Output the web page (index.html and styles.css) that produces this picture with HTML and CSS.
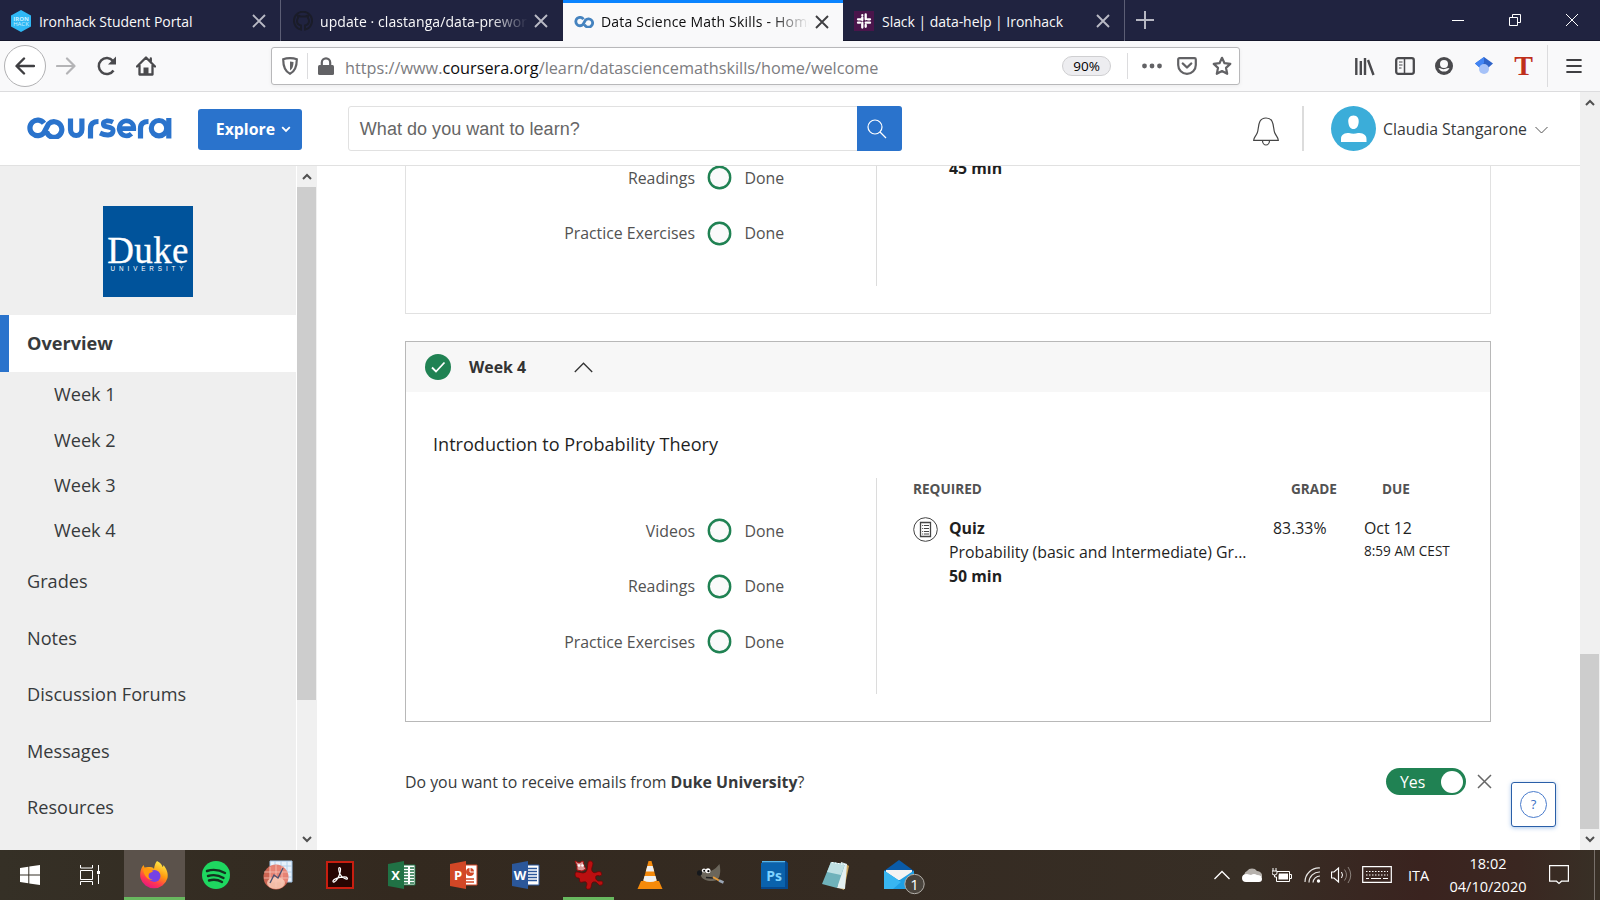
FILE: index.html
```
<!DOCTYPE html>
<html lang="en">
<head>
<meta charset="utf-8">
<title>Data Science Math Skills - Home</title>
<link rel="stylesheet" href="styles.css">
</head>
<body>
<div class="desktop">
  <div class="tabs">
    <div class="tab">
      <svg class="fav" width="20" height="22" viewBox="0 0 20 22"><path d="M10 0l10 5.5v11L10 22 0 16.500v-11z" fill="#2fb8f5"/><text x="10" y="10.500" class="fav-text">IRON</text><text x="10" y="16" class="fav-text thin">HACK</text></svg>
      <span class="tab-title t1">Ironhack Student Portal</span>
      <svg class="tab-x" width="14" height="14" viewBox="0 0 14 14"><path d="M1 1l12 12M13 1L1 13"/></svg>
    </div>
    <div class="tab second">
      <svg class="fav" width="20" height="20" viewBox="0 0 20 20"><path d="M8 18.500v-4c-3-.5-4-2-4-4.500q0-1.500 1-3l0-2.500 2.500 1h5L15 4.500V7q1 1.500 1 3c0 2.500-1 4-4 4.500v4a9 9 0 1 0-4 0z" fill="none" stroke="#1a1c29" stroke-width="2"/></svg>
      <span class="tab-title fade t2">update · clastanga/data-prework</span>
      <svg class="tab-x" width="14" height="14" viewBox="0 0 14 14"><path d="M1 1l12 12M13 1L1 13"/></svg>
    </div>
    <div class="tab active">
      <svg class="fav" width="20" height="12" viewBox="0 0 20 12"><path d="M9.500 3.200A4.200 4.200 0 1 0 9 8.500L11.500 4a4.200 4.200 0 1 1-1 4.500" fill="none" stroke="#4583bf" stroke-width="2.800"/></svg>
      <span class="tab-title fade t3">Data Science Math Skills - Home</span>
      <svg class="tab-x" width="14" height="14" viewBox="0 0 14 14"><path d="M1 1l12 12M13 1L1 13"/></svg>
    </div>
    <div class="tab fourth">
      <svg class="fav" width="20" height="20" viewBox="0 0 20 20"><path fill="#4a154b" d="M0 0h20v20H0z"/><path d="M8.300 6.500V9M8.300 4.200h0M4 8.300h4.300M11.700 3.500v4.800M13.800 8.300h2.200M11.700 11.700H16M11.700 14v1.800M8.300 11.700v4.800M4 11.700h2" stroke="#fff" stroke-width="2.300" stroke-linecap="round"/></svg>
      <span class="tab-title t4">Slack | data-help | Ironhack</span>
      <svg class="tab-x" width="14" height="14" viewBox="0 0 14 14"><path d="M1 1l12 12M13 1L1 13"/></svg>
    </div>
    <svg class="plus" width="18" height="18" viewBox="0 0 18 18"><path d="M9 0v18M0 9h18" stroke="#b6b7c2" stroke-width="2"/></svg>
    <div class="win">
      <svg width="12" height="14" viewBox="0 0 12 14"><path d="M0 7.500h12" stroke="#fff"/></svg>
      <svg width="12" height="14" viewBox="0 0 12 14"><path d="M.5 4.500h8v8h-8zM3.500 4V1.500h8v8H9" fill="none" stroke="#fff"/></svg>
      <svg width="14" height="14" viewBox="0 0 14 14"><path d="M1 1l12 12M13 1L1 13" stroke="#fff"/></svg>
    </div>
  </div>

  <div class="toolbar">
    <div class="nav">
      <span class="back"><svg width="20" height="18" viewBox="0 0 20 18"><path d="M19 9H2M9 1.500L1.500 9 9 16.500" fill="none" stroke="#3f3f42" stroke-width="2.400" stroke-linecap="round" stroke-linejoin="round"/></svg></span>
      <svg width="20" height="18" viewBox="0 0 20 18"><path d="M1 9h17M11 1.500L18.500 9 11 16.500" fill="none" stroke="#b4b4b6" stroke-width="2.200" stroke-linecap="round" stroke-linejoin="round"/></svg>
      <svg width="20" height="20" viewBox="0 0 20 20"><path d="M16.500 14.500A8 8 0 1 1 16 5" fill="none" stroke="#4a4a4d" stroke-width="2.500"/><path d="M19 .5v8h-8z" fill="#4a4a4d"/></svg>
      <svg class="home" width="20" height="20" viewBox="0 0 20 20"><path d="M1 10.500L10 1.500l9 9M3.500 9.500v9h13v-9M14.800 2.500v3" fill="none" stroke="#4a4a4d" stroke-width="2.300" stroke-linecap="round" stroke-linejoin="round"/><path d="M7.500 18v-6.500h5V18z" fill="#4a4a4d"/></svg>
    </div>
    <div class="url">
      <svg class="shield" width="16" height="18" viewBox="0 0 16 18"><path d="M8 1.200c2.500 0 5 .4 6.800 1.100C14.800 10 13 14.500 8 16.800 3 14.500 1.200 10 1.200 2.300 3 1.600 5.500 1.200 8 1.200z" fill="none" stroke="#626265" stroke-width="2.200"/><path d="M8 4.500v9C10.500 12 11.500 9 11.500 5z" fill="#626265"/></svg>
      <i class="sep"></i>
      <svg class="lock" width="16" height="18" viewBox="0 0 16 18"><path d="M3.800 9V5.500a4.200 4.200 0 0 1 8.400 0V9" fill="none" stroke="#626265" stroke-width="2.200"/><rect y="8" width="16" height="10" rx="1.500" fill="#626265"/></svg>
      <span class="address">https://www.<b>coursera.org</b>/learn/datasciencemathskills/home/welcome</span>
      <span class="zoom">90%</span>
      <i class="sep wide"></i>
      <svg class="dots" width="20" height="6" viewBox="0 0 20 6"><circle cx="2.500" cy="3" r="2.400"/><circle cx="10" cy="3" r="2.400"/><circle cx="17.500" cy="3" r="2.400"/></svg>
      <svg width="20" height="18" viewBox="0 0 20 18"><path d="M1.200 2.500q0-1.300 1.300-1.300h15q1.300 0 1.300 1.300V8a8.800 8.800 0 0 1-17.600 0z" fill="none" stroke="#626265" stroke-width="2.200"/><path d="M5.800 6.500l4.200 4 4.200-4" fill="none" stroke="#626265" stroke-width="2.400" stroke-linecap="round" stroke-linejoin="round"/></svg>
      <svg class="star" width="20" height="20" viewBox="0 0 20 20"><path d="M10 1.800l2.500 5.400 5.800.7-4.300 4 1.200 5.900L10 15l-5.200 2.800L6 11.900l-4.300-4 5.800-.7z" fill="none" stroke="#626265" stroke-width="2.200" stroke-linejoin="round"/></svg>
    </div>
    <div class="tools">
      <svg width="20" height="19" viewBox="0 0 20 19"><path d="M1.300 1v17M5.800 4v14M10 1v17M13 3l5.500 15" stroke="#4a4a4d" stroke-width="2.400" fill="none"/></svg>
      <svg width="20" height="18" viewBox="0 0 20 18"><rect x="1.200" y="1.200" width="17.600" height="15.600" rx="2" fill="none" stroke="#4a4a4d" stroke-width="2.300"/><path d="M9.500 1v16" stroke="#4a4a4d" stroke-width="1.500"/><path d="M4 5h3.500M4 8h3.500M4 11h2.500" stroke="#4a4a4d"/></svg>
      <svg width="18" height="18" viewBox="0 0 18 18"><circle cx="9" cy="9" r="9" fill="#4a4a4d"/><circle cx="9" cy="7" r="4" fill="#f9f9fa"/><path d="M3.500 11q1.800 0 3 .8a5 5 0 0 0 4 0q1.200-.8 4-.8a6 6 0 0 1-11 0z" fill="#f9f9fa"/></svg>
      <svg class="scholar" width="18" height="18" viewBox="0 0 18 18"><path d="M9 0l9 6.500-4.500 4h-9L0 6.500z" fill="#2f64c8"/><path d="M9 0L0 6.500l4.500 4L9 6z" fill="#4285f4"/><circle cx="9" cy="12" r="5" fill="#a6c2f8"/></svg>
      <span class="tee">T</span>
      <span class="menu"><svg width="16" height="16" viewBox="0 0 16 16"><path d="M1.200 2h13.600M1.200 8h13.600M1.200 14h13.600" stroke="#3f3f42" stroke-width="2.200" stroke-linecap="round"/></svg></span>
    </div>
  </div>

  <div class="page">
    <div class="site">
      <header class="header">
        <svg class="logo" width="145" height="22" viewBox="0 0 145 22" fill="none" stroke="#2a73cc" stroke-width="5.200">
          <path d="M17 6.300A7.800 7.800 0 1 0 17 15.500L21.500 7A7.800 7.800 0 1 1 19.500 14.500"/>
          <path d="M43.500 1.500V12.500a5.700 6 0 0 0 11.400 0V1.500"/>
          <path d="M63.500 21.500V11.500q0-7 8-7"/>
          <path d="M86 5.200q-3-1.500-6.500-1.200c-4.500.7-4 5 0 5.700 5.500 1 7 1.800 6.500 4.800-.8 4.500-7.500 4.300-13 1.500" stroke-width="4.800"/>
          <path d="M91.500 11.700h15.300a7.300 7.500 0 1 0-2.300 5.100" stroke-width="4.700"/>
          <path d="M113.500 21.500V11.500q0-7 8-7"/>
          <circle cx="132" cy="11.200" r="7.700"/><path d="M141.800 1v20.500"/>
        </svg>
        <span class="explore">Explore<svg width="10" height="7" viewBox="0 0 10 7"><path d="M1.200 1.200L5 5l3.800-3.800" fill="none" stroke="#fff" stroke-width="1.800"/></svg></span>
        <div class="search"><span>What do you want to learn?</span><div class="go"><svg width="20" height="20" viewBox="0 0 20 20"><circle cx="8" cy="8" r="7" fill="none" stroke="#fff" stroke-width="1.200"/><path d="M13 13l6 6" stroke="#fff" stroke-width="1.300"/></svg></div></div>
        <svg class="bell" width="26" height="29" viewBox="0 0 26 29"><path d="M.7 23.300c0-3.300 2-3.600 3.600-7.500C6.200 11 4.200 1 13 1s6.800 10 8.700 14.800c1.600 3.900 3.600 4.200 3.600 7.500zM9.500 23.500a3.500 4.500 0 0 0 7 0" fill="none" stroke="#444" stroke-width="1.200"/></svg>
        <div class="user">
          <svg width="45" height="45" viewBox="0 0 45 45"><circle cx="22.500" cy="22.500" r="22.500" fill="#3badd9"/><path d="M22.500 9.500c4 0 5.500 3 5.200 6.500-.4 4.500-2.200 7-5.200 7s-4.800-2.500-5.200-7c-.3-3.500 1.200-6.500 5.200-6.500zM10 36v-3c0-5 4-6 8-6q4.500 1.500 9 0c4 0 8.500 1 8.500 6v3z" fill="#fff"/></svg>
          <span>Claudia Stangarone</span>
          <svg class="caret" width="13" height="8" viewBox="0 0 13 8"><path d="M.5 1l6 6 6-6" fill="none" stroke="#555"/></svg>
        </div>
      </header>
      <div class="body">
        <nav class="side">
          <div class="duke"><span class="duke-name">Duke</span><span class="duke-sub">UNIVERSITY</span></div>
          <div class="item on">Overview</div>
          <div class="item week first">Week 1</div>
          <div class="item week">Week 2</div>
          <div class="item week">Week 3</div>
          <div class="item week">Week 4</div>
          <div class="item">Grades</div>
          <div class="item">Notes</div>
          <div class="item">Discussion Forums</div>
          <div class="item">Messages</div>
          <div class="item">Resources</div>
        </nav>
        <div class="bar side-bar">
          <svg width="10" height="7" viewBox="0 0 10 7"><path d="M1 6l4-4 4 4"/></svg><i></i><svg width="10" height="7" viewBox="0 0 10 7"><path d="M1 1l4 4 4-4"/></svg>
        </div>
        <main class="main">
          <section class="card prev">
            <div class="progress">
              <div class="row"><span>Readings</span><i></i><span>Done</span></div>
              <div class="row"><span>Practice Exercises</span><i></i><span>Done</span></div>
            </div>
            <div class="prev-time">45 min</div>
          </section>
          <section class="card now">
            <div class="card-head">
              <svg width="26" height="26" viewBox="0 0 26 26"><circle cx="13" cy="13" r="13" fill="#208253"/><path d="M7 13.500l4 4 8.500-9" fill="none" stroke="#fff" stroke-width="1.800"/></svg>
              <b>Week 4</b>
              <svg width="19" height="11" viewBox="0 0 19 11"><path d="M.8 10L9.500 1.200 18.200 10" fill="none" stroke="#333" stroke-width="1.300"/></svg>
            </div>
            <h2>Introduction to Probability Theory</h2>
            <div class="cols">
              <div class="progress">
                <div class="row"><span>Videos</span><i></i><span>Done</span></div>
                <div class="row"><span>Readings</span><i></i><span>Done</span></div>
                <div class="row"><span>Practice Exercises</span><i></i><span>Done</span></div>
              </div>
              <div class="required">
                <div class="req-head"><span>REQUIRED</span><span class="h-grade">GRADE</span><span class="h-due">DUE</span></div>
                <div class="req">
                  <svg width="25" height="25" viewBox="0 0 25 25" fill="none" stroke="#444"><circle cx="12.500" cy="12.500" r="11.800"/><path d="M7.500 5.500h10v14h-10z" stroke-width="1.300"/><path d="M9.200 8.500h1M9.200 11.500h1M9.200 14.500h1M9.200 17h1M11 8.500h5M11 11.500h5M11 14.500h5M11 17h5"/></svg>
                  <div class="desc"><b>Quiz</b><span>Probability (basic and Intermediate) Gr...</span><b>50 min</b></div>
                  <span class="grade">83.33%</span>
                  <div class="due"><span>Oct 12</span><small>8:59 AM CEST</small></div>
                </div>
              </div>
            </div>
          </section>
          <div class="emails">
            <span>Do you want to receive emails from <b>Duke University</b>?</span>
            <span class="toggle">Yes<i></i></span>
            <svg width="15" height="15" viewBox="0 0 15 15"><path d="M1 1l13 13M14 1L1 14" stroke="#666" stroke-width="1.500"/></svg>
          </div>
          <div class="help"><span>?</span></div>
        </main>
      </div>
    </div>
    <div class="bar page-bar">
      <svg width="10" height="7" viewBox="0 0 10 7"><path d="M1 6l4-4 4 4"/></svg><i></i><svg width="10" height="7" viewBox="0 0 10 7"><path d="M1 1l4 4 4-4"/></svg>
    </div>
  </div>

  <div class="taskbar">
    <div class="app w-win"><svg width="20" height="20" viewBox="0 0 20 20" fill="#fff"><path d="M0 3l8.300-1.200v7.700H0zM9.300 1.600L20 0v9.500H9.300zM0 10.500h8.300v7.700L0 17zM9.300 10.500H20V20L9.300 18.400z"/></svg></div>
    <div class="app w-task"><svg width="20" height="20" viewBox="0 0 20 20" fill="none" stroke="#fff"><path d="M.5 0v3h12V0M.5 20v-3.500h12V20M.5 5.500h12v9H.5zM18.500 0v6M18.500 9.500V19"/><path d="M17 6h3v3h-3z" fill="#fff" stroke="none"/></svg></div>
    <div class="app w-ff focus"><svg width="30" height="30" viewBox="0 0 30 30"><defs><linearGradient id="fx" x1=".8" y1="0" x2=".3" y2="1"><stop offset="0" stop-color="#fff44f"/><stop offset=".45" stop-color="#ff980e"/><stop offset=".75" stop-color="#ff3750"/><stop offset="1" stop-color="#e31587"/></linearGradient></defs><path d="M18 1c4 2 5 4 5.500 6 1-.5 1-2 1-2 3 4 5 8 4 13a14 14 0 0 1-27 0C.5 13 2 8 4.500 5l1 2.500L9 7c3 0 5 0 6 2 .5-3 1-6 3-8z" fill="url(#fx)"/><circle cx="15.500" cy="16" r="6" fill="#7542e5"/><path d="M4 9c4-2 8 0 10 2.500l-4 2c-2 3 1 6 4 6-5 1-9-3-10-10.500z" fill="#ff980e"/></svg></div>
    <div class="app w-sp"><svg width="28" height="28" viewBox="0 0 28 28"><circle cx="14" cy="14" r="14" fill="#1ed760"/><path d="M5 10q9-3 18 2M6 15q8-2.500 15.500 2M7 19.500q7-2 13 1.500" fill="none" stroke="#14311f" stroke-width="2.400" stroke-linecap="round"/></svg></div>
    <div class="app w-it"><svg width="30" height="30" viewBox="0 0 30 30"><path d="M7 1h22v21H7z" fill="#e7f1fb" stroke="#9fc1e3"/><path d="M12 1v21M18 1v21M24 1v21M7 6h22M7 12h22M7 17h22" stroke="#b5d0ea"/><circle cx="13" cy="17" r="12.500" fill="#e8705c" fill-opacity=".85"/><ellipse cx="13" cy="23" rx="9" ry="6" fill="#fbd3bd" opacity=".8"/><path d="M7 7v20M13 5v22M19 6v20M1 12h24M1 18h24" stroke="#f9c5b8" stroke-width=".8"/><path d="M7 23l4-8 4 3 5-10" fill="none" stroke="#4d5270" stroke-width="1.400"/></svg></div>
    <div class="app w-pdf"><svg width="28" height="28" viewBox="0 0 28 28"><path d="M1 1h26v26H1z" fill="#260502" stroke="#c81e10" stroke-width="2"/><path d="M13.500 6.500c2.200 0 .5 7-2 11.200-2 3.300-5 4.300-4.500 2.300C8 17 20 14.500 21.300 17s-5.600.5-7.600-4.500c-1.300-3.200-1.200-6 -.2-6z" fill="none" stroke="#fff" stroke-width="1.200"/></svg></div>
    <div class="app w-xl"><svg width="28" height="28" viewBox="0 0 28 28"><path d="M14 4h13v20H14z" fill="#fff" stroke="#207245"/><path d="M16 7h4M16 10h4M16 13h4M16 16h4M16 19h4M16 22h4M22 7h4M22 10h4M22 13h4M22 16h4M22 19h4M22 22h4" stroke="#207245" stroke-width="1.500"/><path d="M0 3l16-3v28L0 25z" fill="#207245"/><text x="7.500" y="19" class="office">X</text></svg></div>
    <div class="app w-pp"><svg width="28" height="28" viewBox="0 0 28 28"><path d="M14 4h13v20H14z" fill="#fff" stroke="#d24726"/><circle cx="20" cy="11" r="4" fill="#d24726"/><path d="M20 11V6.500M20 11h5" stroke="#fff"/><path d="M16 18h8M16 21h8" stroke="#d24726" stroke-width="1.500"/><path d="M0 3l16-3v28L0 25z" fill="#d24726"/><text x="8" y="19" class="office">P</text></svg></div>
    <div class="app w-wd"><svg width="28" height="28" viewBox="0 0 28 28"><path d="M14 4h13v20H14z" fill="#fff" stroke="#2b579a"/><path d="M16 7.500h9M16 10.500h9M16 13.500h9M16 16.500h9M16 19.500h9" stroke="#2b579a" stroke-width="1.500"/><path d="M0 3l16-3v28L0 25z" fill="#2b579a"/><text x="8" y="19" class="office">W</text></svg></div>
    <div class="app w-red run"><svg width="30" height="30" viewBox="0 0 30 30"><path d="M1 14q0-3 3-2l5 1q3 0 4-3c1-3 0-7 2-9q3-1 4 2c0 3-2 5-1 8 1 2 3 2 5 1q2-1 4 0 2 3-1 4-2-1-4 0c-1 2 0 4 2 5l4 0q2 2 0 4-3 1-4-1-2-3-5-2c-2 1-1 5-3 7q-3 1-4-1c0-2 2-4 0-6-2-1-4 1-6 0-1-1 0-3-1-4-1 0-4 0-4-4z" fill="#bb0f10" stroke="#650808" stroke-width=".8"/><path d="M1 1l4 2 4-2 1 5 2 3-4 2-5-1V6z" fill="#d99a9a" stroke="#a11"/><circle cx="5" cy="5.500" r="1.300" fill="#fff"/><circle cx="8.500" cy="5.500" r="1.300" fill="#fff"/></svg></div>
    <div class="app w-vlc"><svg width="26" height="30" viewBox="0 0 26 30"><path d="M4 21h18l3.500 8H.5z" fill="#f58a0b"/><path d="M11.500 1h3l5.500 21q-7 4-14 0z" fill="#f58a0b"/><path d="M10.300 6h5.400l1.500 5.500H8.800zM7.500 16h11l1.200 4.500q-6.700 3-13.400 0z" fill="#eef0f2"/></svg></div>
    <div class="app w-gimp"><svg width="30" height="24" viewBox="0 0 30 24"><path d="M4 9.500q2-2 4-1 4 1 7-.5c4-2 6-4 8.500-7q1.500 7 0 12c-1 4-4 5-8 5-5 0-9-1.500-10.500-5z" fill="#6b665b"/><circle cx="8" cy="7.500" r="2.100" fill="#fff"/><circle cx="12" cy="7.800" r="2.500" fill="#fff"/><circle cx="8.200" cy="7.800" r="1"/><circle cx="12.400" cy="8.200" r="1.100"/><ellipse cx="3.500" cy="10" rx="2.500" ry="2.800" fill="#15181c"/><path d="M10 14.500l7 .5" stroke="#222" stroke-width="1.500"/><path d="M17 14l6 3.500" stroke="#e79b38" stroke-width="2"/><path d="M23 17.500l4.500 2" stroke="#9ba6b5" stroke-width="2.600"/></svg></div>
    <div class="app w-ps"><svg width="28" height="28" viewBox="0 0 28 28"><path d="M2 0h24l2 2v26H1z" fill="#06498d"/><path d="M1 2h24v24H1z" fill="#0a62ac"/><path d="M2 .7h23" stroke="#55b6ec" stroke-width="1.400"/><text x="14" y="19.500" class="ps">Ps</text></svg></div>
    <div class="app w-note"><svg width="28" height="29" viewBox="0 0 28 29"><path d="M24 3l3 2-5 24-5-2z" fill="#c9a35a"/><path d="M19 1l6 2-2 25-8-1z" fill="#e3f0f1"/><path d="M9 1l14 2-8 24-15-4z" fill="#6fb2bb"/><path d="M9 1l14 2-4 11L5 11z" fill="#bfe0e3"/><path d="M10 1.500l13 2" stroke="#fff" stroke-dasharray="1.500 1.500"/></svg></div>
    <div class="app w-mail"><svg width="41" height="35" viewBox="0 0 41 35"><path d="M0 11L15 0l15 11v18H0z" fill="#0a5ba8"/><path d="M2 10h26v10H2z" fill="#f3f3f3"/><path d="M0 10.500l15 10 15-10V29H0z" fill="#1f9fe4"/><path d="M0 29V10.500L17 22l-8 7z" fill="#38b6f1"/><circle cx="30.500" cy="24" r="9.700" fill="#4a443d" stroke="#b3afa9"/><text x="30.500" y="29.500" class="badge">1</text></svg></div>
    <div class="tray">
      <svg width="16" height="10" viewBox="0 0 16 10"><path d="M.5 9L8 1.500 15.500 9" fill="none" stroke="#fff" stroke-width="1.300"/></svg>
      <svg class="cloud" width="20" height="14" viewBox="0 0 20 14"><path d="M4 10a4 4 0 0 1 1-7 6 5.500 0 0 1 10 0 5 5 0 0 1 5 6l-7 1z" fill="#b6b1ac"/><path d="M0 10q0-4 5-4l4 1q3-2 6 0 5 0 5 4 0 3-3 3H4q-4 0-4-4z" fill="#fff"/></svg>
      <svg width="20" height="15" viewBox="0 0 20 15"><path d="M5 3.500h12.500v10H4.500V9M18 6.500h1.500v4H18" fill="none" stroke="#fff"/><path d="M7 5.500h9v6H6.500V8z" fill="#fff"/><path d="M1 0v3M4 0v3M0 3h5v2q0 2-2.500 2T0 5zM2.500 7v2h2" stroke="#fff" fill="none"/></svg>
      <svg class="wifi" width="17" height="16" viewBox="0 0 17 16"><path d="M1 15A14 14 0 0 1 16 1M5 15.500A10.500 10.500 0 0 1 16 5M9 15.500a7 7 0 0 1 7-6.500" fill="none" stroke="#e8e6e4" stroke-width="1.200"/><circle cx="14.500" cy="14" r="1.700" fill="#fff"/></svg>
      <svg class="sound" width="21" height="18" viewBox="0 0 21 18"><path d="M.5 6H3l4.500-4v14L3 12H.5z" fill="none" stroke="#fff" stroke-width="1.200"/><path d="M10.500 6q2 3 0 6" stroke="#fff" fill="none"/><path d="M13.500 3.500q4 5.500 0 11M17 1q5.500 8 0 16" stroke="#8b827c" fill="none"/></svg>
      <svg width="30" height="18" viewBox="0 0 30 18" fill="none" stroke="#fff"><path d="M.7.7h28.600v15.600H.7z" stroke-width="1.200"/><path d="M4 5.500h22M4 9h22" stroke-dasharray="1.500 1.500"/><path d="M4 12.500h3M9 12.500h10M21 12.500h5"/></svg>
      <span class="lang">ITA</span>
      <div class="clock"><span>18:02</span><span class="date">04/10/2020</span></div>
      <svg class="notif" width="20" height="20" viewBox="0 0 20 20"><path d="M.6.600h18.800v15.600h-6.900L10 18.500l-2.500-2.300H.6z" fill="none" stroke="#fff" stroke-width="1.200"/></svg>
      <i class="peek"></i>
    </div>
  </div>
</div>
</body>
</html>
```
FILE: styles.css
```
* { box-sizing: border-box; }
body { margin: 0; font-family: "Open Sans", "Noto Sans", sans-serif; }
svg { flex: none; display: block; }
.desktop { width: 1600px; height: 900px; overflow: hidden; display: flex; flex-direction: column; background: #fff; }

.tabs { height: 41px; flex: none; background: #202340; display: flex; align-items: center; border-bottom: 1px solid #15172c; }
.tab { width: 281px; height: 41px; flex: none; display: flex; align-items: center; padding: 2px 14px 0 11px; border-right: 1px solid #5c5e75; color: #f9f9fa; font-size: 14px; }
.tab .fav { margin-right: 8px; }
.tab.active { width: 280px; background: #f9f9fa; color: #0c0c0d; border-top: 3px solid #0a84ff; border-right: 0; padding-top: 0; }
.tab.active .fav { margin-right: 7px; }
.tab.second { width: 282px; border-right: 0; padding-left: 12px; padding-right: 15px; }
.tab.second .fav { margin-right: 7px; }
.tab.fourth { width: 282px; }
.t1, .t4 { letter-spacing: -.04px; }
.t2 { letter-spacing: .08px; }
.t3 { letter-spacing: .2px; }
.tab-title { flex: 1; white-space: nowrap; overflow: hidden; }
.t2, .t3 { margin-right: 6px; }
.fade { -webkit-mask-image: linear-gradient(90deg, #000 82%, transparent 100%); mask-image: linear-gradient(90deg, #000 82%, transparent 100%); }
.tab-x path { stroke: #b9bac5; stroke-width: 1.9; }
.tab.active .tab-x path { stroke: #3f3f42; }
.fav-text { font: 700 6px "Open Sans", sans-serif; fill: #c9f0ff; text-anchor: middle; }
.fav-text.thin { font-weight: 400; }
.plus { margin-left: 11px; }
.win { margin-left: auto; display: flex; align-items: center; gap: 44.500px; padding-right: 21px; }

.toolbar { height: 51px; flex: none; background: #f9f9fa; border-bottom: 1px solid #dcdcde; display: flex; align-items: center; }
.nav { display: flex; align-items: center; gap: 21px; width: 271px; padding-left: 4px; flex: none; }
.home { margin-left: -2px; }
.back { width: 42px; height: 42px; border: 1px solid #b1b1b3; border-radius: 50%; background: #fff; display: flex; align-items: center; justify-content: center; margin-right: -11px; }
.url { width: 969px; height: 38px; flex: none; border: 1px solid #b8b8ba; border-radius: 3px; background: #fff; display: flex; align-items: center; padding-right: 7px; box-shadow: 0 1px 4px rgba(0,0,0,.06); }
.shield { margin-left: 10px; }
.sep { width: 1px; height: 26px; background: #dcdcde; margin: 0 10px 0 9px; flex: none; }
.sep.wide { margin: 0 14px 0 16px; }
.address { flex: 1; margin-left: 11px; font-size: 16.250px; color: #7c7c80; white-space: nowrap; padding-top: 3px; }
.address b { font-weight: 400; color: #0c0c0d; }
.zoom { width: 49px; height: 20px; border: 1px solid #cfcfd1; border-radius: 10px; background: #ededf0; font-size: 13.500px; line-height: 19px; text-align: center; }
.dots { margin-right: 15px; fill: #626265; }
.star { margin-left: 15px; }
.tools { flex: 1; display: flex; align-items: center; padding-left: 115px; gap: 20px; }
.scholar { margin-left: 2px; }
.tee { font: 700 28px/24px "Liberation Serif", serif; color: #bf2f1b; width: 19px; text-align: center; margin-left: 1px; }
.menu { width: 51px; height: 42px; border-left: 1px solid #dcdcde; padding: 13px 0 0 18px; margin-left: -6px; flex: none; }

.page { height: 758px; flex: none; display: flex; }
.site { width: 1580px; flex: none; display: flex; flex-direction: column; }
.bar { background: #f0f0f0; display: flex; flex-direction: column; align-items: center; flex: none; }
.bar path { fill: none; stroke: #505050; stroke-width: 2; }
.bar i { width: 19px; background: #cdcdcd; }
.page-bar { width: 20px; padding: 7px 1px 0 0; }
.page-bar i { margin-top: 548px; height: 175px; margin-bottom: 7px; }
.side-bar { width: 21px; border-left: 1px solid #fff; padding: 7px 1px 0 0; }
.side-bar i { margin-top: 7px; height: 513px; margin-bottom: 136px; }

.header { height: 74px; flex: none; border-bottom: 1px solid #e1e1e1; display: flex; align-items: center; padding: 0 32px 1px 27px; color: #373a3c; font-size: 15.850px; }
.explore { margin: 2px 0 0 26px; width: 104px; height: 41px; border-radius: 3px; background: #2a73cc; color: #fff; font-weight: 700; display: flex; align-items: center; justify-content: center; gap: 6px; padding-left: 7px; }
.search { margin-left: 46px; width: 555px; height: 45px; border: 1px solid #e1e1e1; border-radius: 3px; display: flex; align-items: center; font: 18px "Liberation Sans", sans-serif; color: #666; padding-left: 11px; }
.search span { padding-top: 2px; letter-spacing: .03px; }
.go { margin: -1px -1px -1px auto; width: 45px; height: 45px; background: #2a73cc; border-radius: 0 3px 3px 0; display: flex; align-items: center; justify-content: center; padding: 2px 6px 0 0; }
.bell { margin-left: 351px; margin-top: 7px; }
.user { margin-left: 23px; border-left: 2px solid #dcdcdc; padding-left: 27px; display: flex; align-items: center; white-space: nowrap; }
.user span { margin-left: 7px; width: 145px; padding-top: 2px; }
.caret { margin: 3px 0 0 7px; }

.body { height: 684px; flex: none; display: flex; overflow: hidden; }
.side { width: 296px; flex: none; background: #efefef; color: #373a3c; font-size: 18.150px; }
.duke { margin: 40px 0 18px 103px; width: 90px; height: 91px; background: #00539b; color: #fff; display: flex; flex-direction: column; align-items: center; }
.duke-name { font: 37px/30px "Liberation Serif", serif; margin-top: 30px; letter-spacing: .3px; -webkit-text-stroke: .3px #fff; }
.duke-sub { font: 6.300px/7px "Liberation Sans", sans-serif; letter-spacing: 3.900px; margin: -1px -2px 0 0; }
.item { height: 56.500px; padding-left: 27px; display: flex; align-items: center; }
.item.on { background: #fff; border-left: 9px solid #2a73cc; padding: 0 0 2px 18px; font-weight: 700; height: 57px; }
.item.week { height: 45.200px; padding-left: 54px; }
.item.first { padding-bottom: 1px; }

.main { width: 1263px; flex: none; position: relative; padding-left: 88px; color: #1f1f1f; font-size: 15.860px; }
.card { width: 1086px; border: 1px solid #e1e1e1; display: flex; }
.prev { height: 148px; border-top: 0; margin-bottom: 27px; }
.prev .progress { height: 120px; }
.prev-time { font-weight: 700; margin-left: 72px; margin-top: -9px; }
.progress { width: 471px; border-right: 1px solid #dcdcdc; color: #525252; flex: none; }
.row { height: 55.500px; display: flex; align-items: center; }
.row span:first-child { width: 289px; text-align: right; }
.row i { width: 23px; height: 23px; border: 2.500px solid #208253; border-radius: 50%; margin: 0 13.500px 0 13px; background: #fafafa; box-shadow: 0 0 0 .4px #208253; }
.prev .row:first-child { margin-top: -16px; }
.now { height: 381px; border-color: #b8b8b8; flex-direction: column; }
.card-head { height: 50px; background: #f7f7f7; display: flex; align-items: center; padding-left: 19px; color: #333; flex: none; }
.card-head b { width: 58px; margin: 0 47px 0 18px; white-space: nowrap; }
h2 { margin: 40px 0 0 27px; font-size: 18.080px; line-height: 24px; font-weight: 400; }
.cols { display: flex; margin-top: 22px; }
.cols .progress { height: 216px; padding-top: 25px; }
.required { padding-left: 36px; }
.req-head { font-size: 13.600px; font-weight: 700; color: #525252; display: flex; line-height: 22px; white-space: nowrap; }
.req-head span:first-child { width: 378px; }
.h-grade { width: 91px; }
.req { display: flex; margin-top: 16px; line-height: 24px; white-space: nowrap; }
.req svg { margin: 1px 11px 0 0; }
.desc { width: 324px; display: flex; flex-direction: column; }
.grade { width: 91px; }
.due { display: flex; flex-direction: column; }
.due small { font-size: 13.600px; line-height: 22px; }
.emails { width: 1086px; height: 27px; margin-top: 46px; display: flex; align-items: center; color: #373a3c; white-space: nowrap; }
.toggle { margin-left: auto; margin-right: 11px; width: 80px; height: 27px; border-radius: 14px; background: #208253; color: #fff; display: flex; align-items: center; justify-content: space-between; padding: 0 3px 0 14px; }
.toggle i { width: 22px; height: 22px; border-radius: 50%; background: #fff; }
.help { position: absolute; left: 1194px; top: 616px; width: 45px; height: 45px; border: 1px solid #2a5fa8; border-radius: 3px; background: #fff; box-shadow: 0 1px 4px rgba(42,115,204,.4); display: flex; align-items: center; justify-content: center; }
.help span { width: 27px; height: 27px; border: 1.500px solid #4a7ccc; border-radius: 50%; font-size: 13px; line-height: 25px; color: #3a70c4; text-align: center; }
.emails svg { margin-right: -1px; }

.taskbar { height: 50px; flex: none; display: flex; background: linear-gradient(90deg, #353026 0, #33291f 25%, #352b22 55%, #372e25 78%, #3a231f 89%, #3a2721 95%, #383026 100%); color: #fff; }
.app { height: 50px; width: 62px; flex: none; display: flex; align-items: center; justify-content: center; }
.w-win { width: 60px; }
.w-task { width: 64px; padding-right: 4px; }
.w-ff { width: 61px; }
.focus { background: #5b524b; border-bottom: 3px solid #68b85f; padding: 3px 2px 0 0; }
.w-red { width: 51px; margin: 0 5px 0 6px; }
.run { border-bottom: 3px solid #68b85f; padding-top: 3px; }
.w-mail { padding-left: 10px; padding-top: 4px; width: 64px; }
.w-gimp { padding-right: 3px; }
.office { font: 700 13px "Open Sans", sans-serif; fill: #fff; text-anchor: middle; }
.ps { font: 700 14px "Open Sans", sans-serif; fill: #7fd3ff; text-anchor: middle; }
.badge { font: 15px "Open Sans", sans-serif; fill: #fff; text-anchor: middle; }
.tray { margin-left: auto; width: 386px; flex: none; display: flex; align-items: center; gap: 10px; font-size: 14.500px; }
.cloud { margin-left: 2px; }
.wifi { margin-left: 2px; }
.lang { margin-left: 6px; width: 22px; }
.clock { width: 90px; margin-left: 3px; display: flex; flex-direction: column; text-align: center; line-height: 23px; white-space: nowrap; align-items: center; }
.notif { margin-left: 6px; }
.peek { width: 1px; height: 50px; background: #77706a; margin-left: auto; margin-right: 5px; flex: none; }
```
